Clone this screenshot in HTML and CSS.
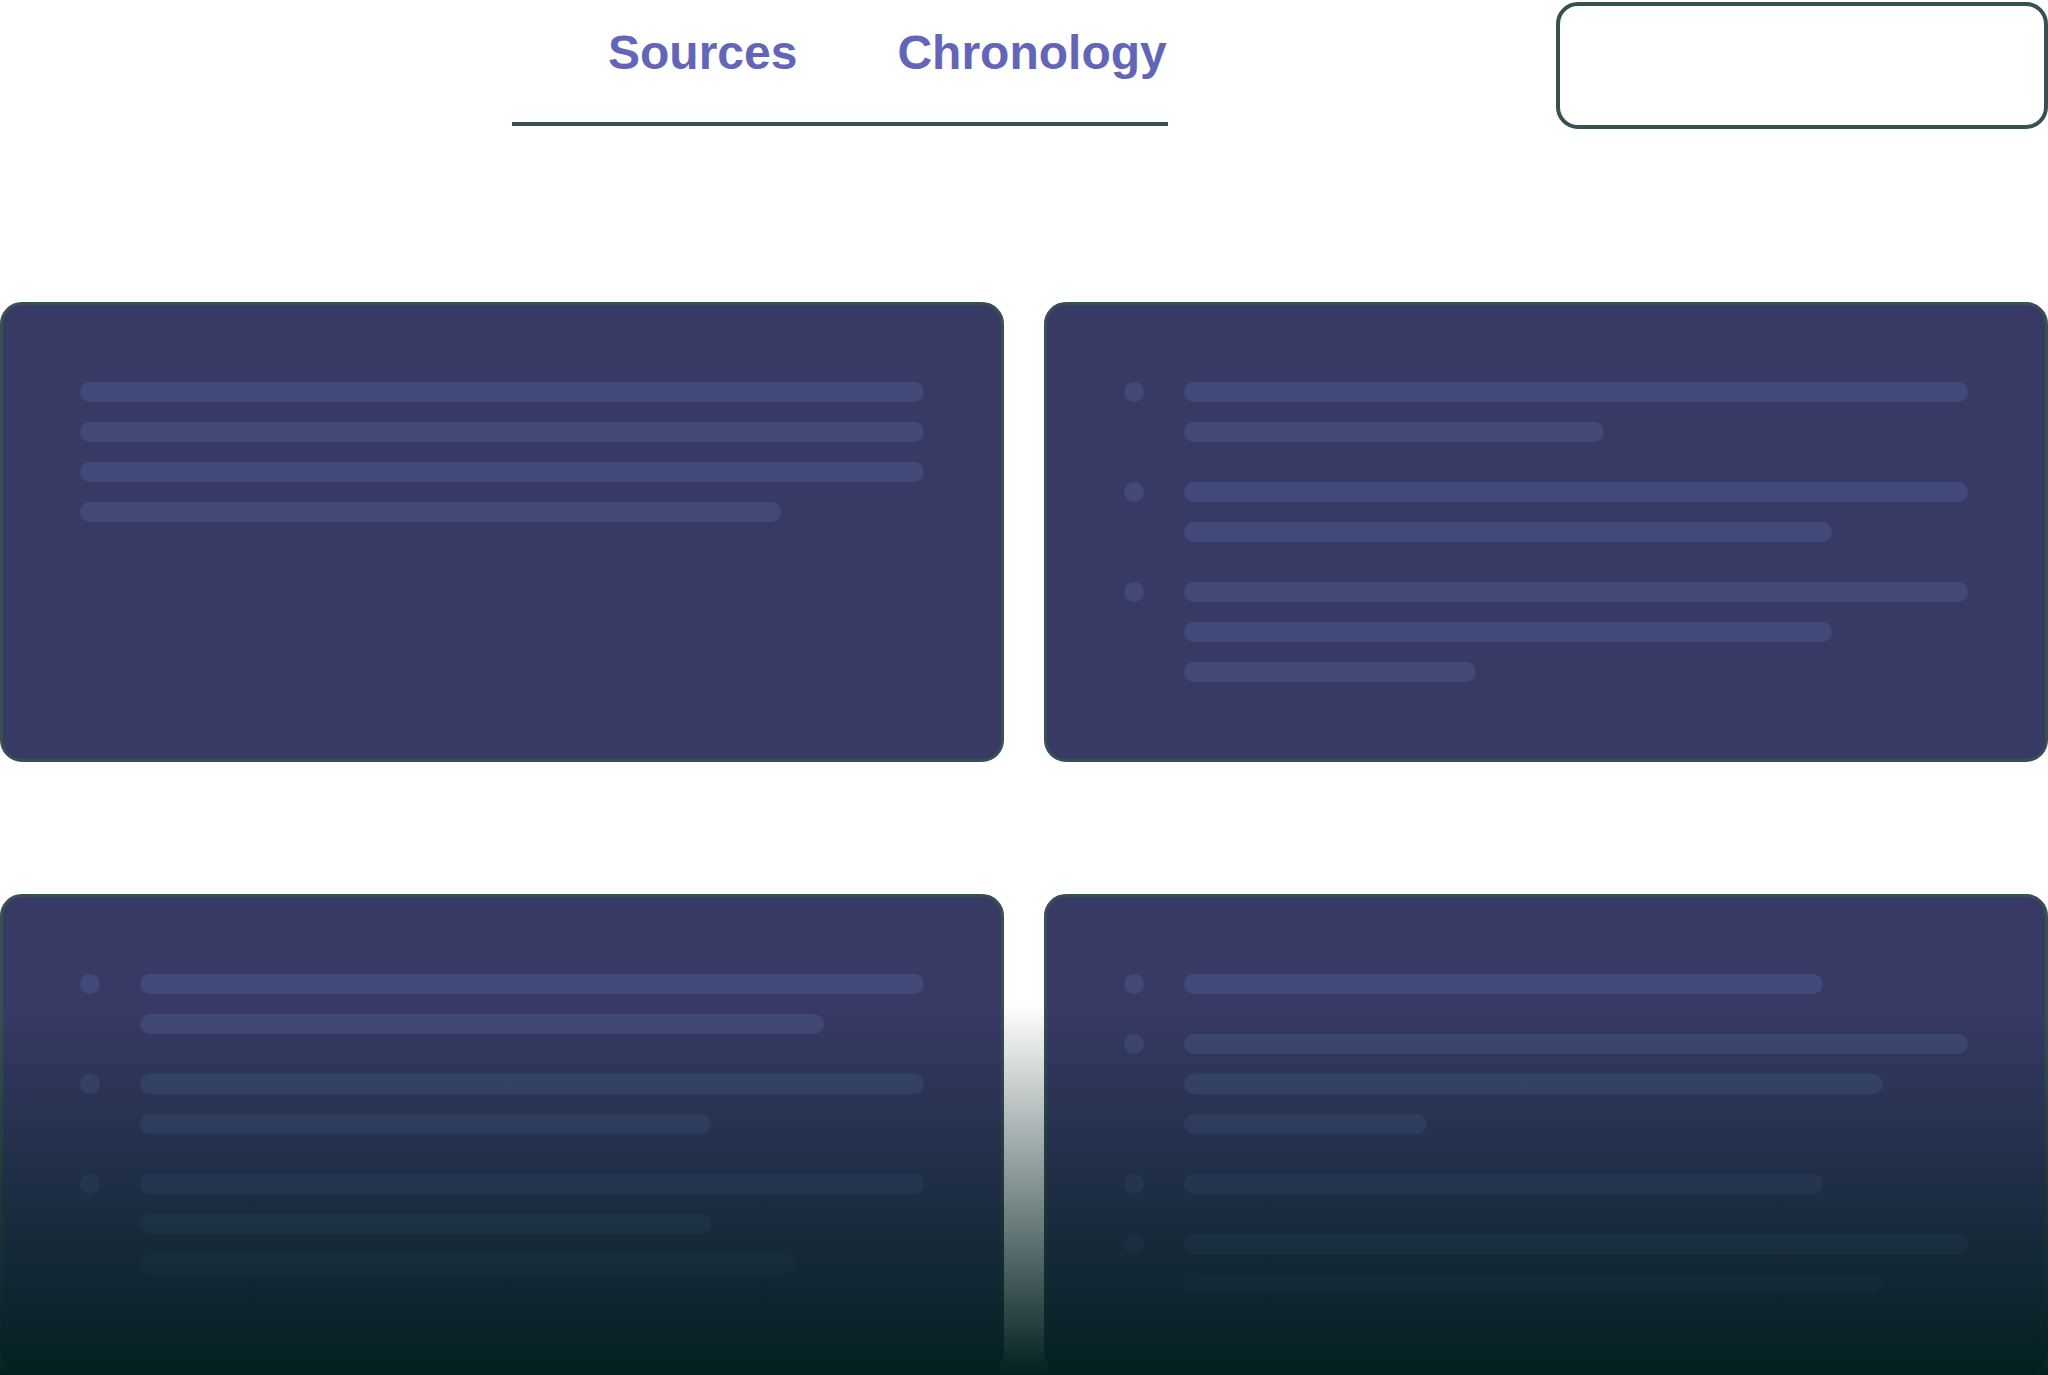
FILE: index.html
```html
<!DOCTYPE html>
<html lang="en">
<head>
<meta charset="utf-8">
<title>Sources and Chronology</title>
<link rel="stylesheet" href="styles.css">
</head>
<body>
<header class="topbar">
  <nav class="tabs">
    <span class="tab">Sources</span>
    <span class="tab">Chronology</span>
  </nav>
  <div class="search"></div>
</header>
<main class="grid">
  <section class="card">
    <div class="lines">
      <div class="bar"></div>
      <div class="bar"></div>
      <div class="bar"></div>
      <div class="bar" style="width:83%"></div>
    </div>
  </section>
  <section class="card">
    <div class="items">
      <div class="item"><span class="dot"></span><div class="lines"><div class="bar"></div><div class="bar" style="width:53.6%"></div></div></div>
      <div class="item"><span class="dot"></span><div class="lines"><div class="bar"></div><div class="bar" style="width:82.7%"></div></div></div>
      <div class="item"><span class="dot"></span><div class="lines"><div class="bar"></div><div class="bar" style="width:82.7%"></div><div class="bar" style="width:37.2%"></div></div></div>
    </div>
  </section>
  <section class="card">
    <div class="items">
      <div class="item"><span class="dot"></span><div class="lines"><div class="bar"></div><div class="bar" style="width:87.2%"></div></div></div>
      <div class="item"><span class="dot"></span><div class="lines"><div class="bar"></div><div class="bar" style="width:72.8%"></div></div></div>
      <div class="item"><span class="dot"></span><div class="lines"><div class="bar"></div><div class="bar" style="width:72.8%"></div><div class="bar" style="width:83.5%"></div></div></div>
    </div>
  </section>
  <section class="card">
    <div class="items">
      <div class="item"><span class="dot"></span><div class="lines"><div class="bar" style="width:81.5%"></div></div></div>
      <div class="item"><span class="dot"></span><div class="lines"><div class="bar"></div><div class="bar" style="width:89.2%"></div><div class="bar" style="width:31%"></div></div></div>
      <div class="item"><span class="dot"></span><div class="lines"><div class="bar" style="width:81.5%"></div></div></div>
      <div class="item"><span class="dot"></span><div class="lines"><div class="bar"></div><div class="bar" style="width:89.2%"></div></div></div>
    </div>
  </section>
</main>
<div class="fade"></div>
</body>
</html>
```

FILE: styles.css
```css
html, body {
  margin: 0;
  padding: 0;
  background: #ffffff;
  overflow: hidden;
}
body {
  width: 2048px;
  height: 1375px;
  position: relative;
  font-family: "Liberation Sans", Arial, sans-serif;
}
.topbar {
  display: flex;
  align-items: flex-start;
  justify-content: space-between;
  height: 129px;
}
.tabs {
  margin-left: 512px;
  width: 656px;
  box-sizing: border-box;
  padding: 25px 0 41px 96px;
  border-bottom: 4px solid #385052;
  display: flex;
  gap: 100px;
}
.tab {
  font-size: 48px;
  line-height: 56px;
  font-weight: 700;
  color: #6366b8;
}
.search {
  margin-top: 2px;
  width: 492px;
  height: 127px;
  box-sizing: border-box;
  border: 4px solid #385052;
  border-radius: 22px;
}
.grid {
  margin-top: 173px;
  display: grid;
  grid-template-columns: 1004px 1004px;
  column-gap: 40px;
  row-gap: 132px;
}
.card {
  box-sizing: border-box;
  background: #383a66;
  border: 3px solid #385052;
  border-radius: 22px;
  padding: 77px;
}
.items {
  display: flex;
  flex-direction: column;
  gap: 40px;
}
.item {
  display: flex;
  gap: 40px;
  align-items: flex-start;
}
.dot {
  flex: none;
  width: 20px;
  height: 20px;
  border-radius: 50%;
  background: #414a78;
}
.lines {
  flex: 1;
  display: flex;
  flex-direction: column;
  gap: 20px;
}
.bar {
  height: 20px;
  width: 100%;
  border-radius: 10px;
  background: #414a78;
}
.fade {
  position: absolute;
  left: 0;
  right: 0;
  bottom: 0;
  height: 370px;
  background: linear-gradient(to bottom, rgba(3, 32, 33, 0) 0%, rgba(3, 32, 33, 1) 100%);
  pointer-events: none;
}
```
